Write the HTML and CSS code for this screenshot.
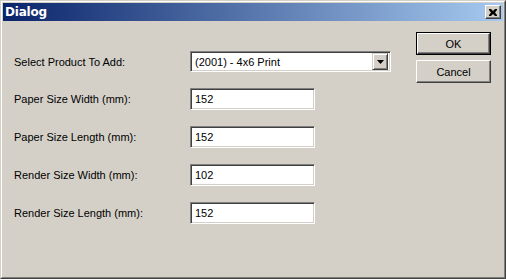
FILE: index.html
```html
<!DOCTYPE html>
<html>
<head>
<meta charset="utf-8">
<link rel="stylesheet" href="styles.css">
</head>
<body>
<div class="window">
  <div class="frame">
    <div class="titlebar">
      <span class="title">Dialog</span>
      <div class="close"><svg width="8" height="7" viewBox="0 0 8 7"><path d="M0 0h2l2 2 2-2h2v1l-2 2.5 2 2.5v1h-2l-2-2-2 2h-2v-1l2-2.5-2-2.5z" fill="#000"/></svg></div>
    </div>
    <div class="content">
      <div class="form">
        <label class="lbl">Select Product To Add:</label>
        <div class="combo">
          <span class="combo-text">(2001) - 4x6 Print</span>
          <div class="drop"><svg width="7" height="4" viewBox="0 0 7 4"><path d="M0 0h7l-3.5 4z" fill="#000"/></svg></div>
        </div>
        <label class="lbl">Paper Size Width (mm):</label>
        <div class="input">152</div>
        <label class="lbl">Paper Size Length (mm):</label>
        <div class="input">152</div>
        <label class="lbl">Render Size Width (mm):</label>
        <div class="input">102</div>
        <label class="lbl">Render Size Length (mm):</label>
        <div class="input">152</div>
      </div>
      <div class="buttons">
        <div class="btn default"><div class="btn-inner">OK</div></div>
        <div class="btn"><div class="btn-inner">Cancel</div></div>
      </div>
    </div>
  </div>
</div>
</body>
</html>
```
FILE: styles.css
```css
html, body {
  margin: 0;
  padding: 0;
  background: #D4D0C8;
}
body {
  font-family: "Liberation Sans", "DejaVu Sans", sans-serif;
  font-size: 11px;
  color: #000;
}
.window {
  width: 506px;
  height: 279px;
  box-sizing: border-box;
  border-top: 1px solid #D4D0C8;
  border-left: 1px solid #D4D0C8;
  border-right: 1px solid #404040;
  border-bottom: 1px solid #404040;
  background: #D4D0C8;
}
.frame {
  height: 100%;
  box-sizing: border-box;
  border-top: 1px solid #FFFFFF;
  border-left: 1px solid #FFFFFF;
  border-right: 1px solid #808080;
  border-bottom: 1px solid #808080;
  padding: 1px;
  display: flex;
  flex-direction: column;
}
.titlebar {
  height: 18px;
  flex: none;
  background: linear-gradient(to right, #0A246A, #A6CAF0);
  display: flex;
  align-items: center;
  justify-content: space-between;
  padding: 0 2px 0 2px;
}
.title {
  color: #fff;
  font-weight: bold;
  font-size: 12px;
  font-family: "DejaVu Sans", "Liberation Sans", sans-serif;
  letter-spacing: -0.2px;
}
.close {
  width: 16px;
  height: 14px;
  box-sizing: border-box;
  background: #D4D0C8;
  border-top: 1px solid #fff;
  border-left: 1px solid #fff;
  border-right: 1px solid #404040;
  border-bottom: 1px solid #404040;
  box-shadow: inset -1px -1px 0 #808080;
  display: flex;
  align-items: center;
  justify-content: center;
  padding-right: 1px;
}
.close svg { display: block; }
.content {
  flex: 1;
  display: flex;
  align-items: flex-start;
}
.form {
  margin-left: 11px;
  margin-top: 30px;
  display: grid;
  grid-template-columns: 176px 201px;
  grid-template-rows: 21px 22px 22px 22px 22px;
  row-gap: 16px;
  align-items: center;
}
.lbl {
  white-space: nowrap;
}
.combo {
  height: 21px;
  width: 201px;
  box-sizing: border-box;
  background: #fff;
  border-top: 1px solid #808080;
  border-left: 1px solid #808080;
  border-right: 1px solid #fff;
  border-bottom: 1px solid #fff;
  box-shadow: inset 1px 1px 0 #404040, inset -1px -1px 0 #D4D0C8;
  display: flex;
  align-items: center;
  padding: 2px 2px 2px 4px;
}
.combo-text {
  flex: 1;
}
.drop {
  width: 16px;
  height: 17px;
  box-sizing: border-box;
  background: #D4D0C8;
  border-top: 1px solid #D4D0C8;
  border-left: 1px solid #D4D0C8;
  border-right: 1px solid #404040;
  border-bottom: 1px solid #404040;
  box-shadow: inset 1px 1px 0 #fff, inset -1px -1px 0 #808080;
  display: flex;
  align-items: center;
  justify-content: center;
}
.drop svg { display: block; }
.input {
  width: 125px;
  height: 22px;
  box-sizing: border-box;
  background: #fff;
  border-top: 1px solid #808080;
  border-left: 1px solid #808080;
  border-right: 1px solid #fff;
  border-bottom: 1px solid #fff;
  box-shadow: inset 1px 1px 0 #404040, inset -1px -1px 0 #D4D0C8;
  padding: 0 4px;
  display: flex;
  align-items: center;
}
.buttons {
  margin-left: auto;
  margin-right: 12px;
  margin-top: 11px;
  display: flex;
  flex-direction: column;
  gap: 5px;
}
.btn {
  width: 75px;
  height: 23px;
  box-sizing: border-box;
  background: #D4D0C8;
  border-top: 1px solid #fff;
  border-left: 1px solid #fff;
  border-right: 1px solid #404040;
  border-bottom: 1px solid #404040;
  box-shadow: inset -1px -1px 0 #808080;
  display: flex;
  align-items: center;
  justify-content: center;
}
.btn.default {
  border: 1px solid #000;
  box-shadow: none;
}
.btn.default .btn-inner {
  width: 100%;
  height: 100%;
  box-sizing: border-box;
  border-top: 1px solid #fff;
  border-left: 1px solid #fff;
  border-right: 1px solid #404040;
  border-bottom: 1px solid #404040;
  box-shadow: inset -1px -1px 0 #808080;
  display: flex;
  align-items: center;
  justify-content: center;
}
```
